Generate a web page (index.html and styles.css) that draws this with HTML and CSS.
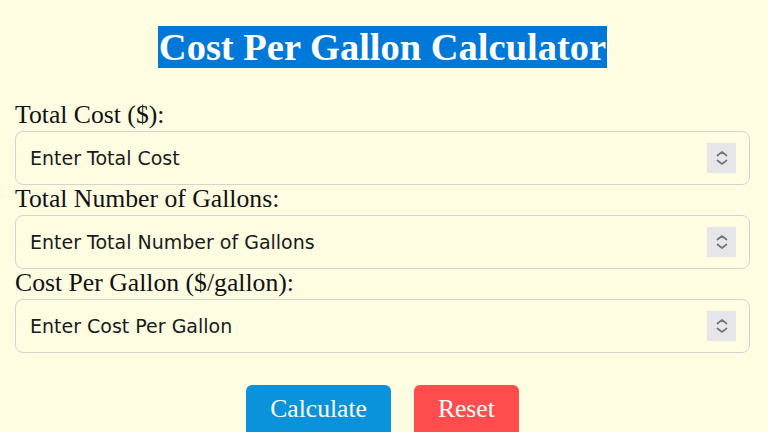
FILE: index.html
```html
<!DOCTYPE html>
<html lang="en">
<head>
    <meta charset="UTF-8" />
    <meta name="viewport" content="width=device-width, initial-scale=1.0" />
    <title>Cost Per Gallon Calculator</title>
    <link rel="stylesheet" href="styles.css">
</head>
<body>
    <div class="calc">
        <h1><span class="title">Cost Per Gallon Calculator</span></h1>
        <form class="form">
            <label for="cost">Total Cost ($):</label>
            <div class="field">
                <input type="text" id="cost" placeholder="Enter Total Cost" />
                <span class="spin"><svg viewBox="0 0 14 18" width="14" height="18"><path d="M2.5 6.5 L7 3 L11.5 6.5 M2.5 11.5 L7 15 L11.5 11.5" fill="none" stroke="#74747e" stroke-width="1.7" stroke-linecap="round" stroke-linejoin="round"/></svg></span>
            </div>
            <label for="gallons">Total Number of Gallons:</label>
            <div class="field">
                <input type="text" id="gallons" placeholder="Enter Total Number of Gallons" />
                <span class="spin"><svg viewBox="0 0 14 18" width="14" height="18"><path d="M2.5 6.5 L7 3 L11.5 6.5 M2.5 11.5 L7 15 L11.5 11.5" fill="none" stroke="#74747e" stroke-width="1.7" stroke-linecap="round" stroke-linejoin="round"/></svg></span>
            </div>
            <label for="cpg">Cost Per Gallon ($/gallon):</label>
            <div class="field">
                <input type="text" id="cpg" placeholder="Enter Cost Per Gallon" />
                <span class="spin"><svg viewBox="0 0 14 18" width="14" height="18"><path d="M2.5 6.5 L7 3 L11.5 6.5 M2.5 11.5 L7 15 L11.5 11.5" fill="none" stroke="#74747e" stroke-width="1.7" stroke-linecap="round" stroke-linejoin="round"/></svg></span>
            </div>
            <div class="buttons">
                <button type="button" class="calculate">Calculate</button>
                <button type="reset" class="reset">Reset</button>
            </div>
        </form>
    </div>
</body>
</html>
```

FILE: styles.css
```css
body{
    margin: 0;
    background-color: #fffde1;
    font-family: "Liberation Serif", "Times New Roman", serif;
    color: #111;
}
.calc{
    padding: 0 18px 0 15px;
}
h1{
    margin: 0;
    padding-top: 26px;
    text-align: center;
    font-size: 38.5px;
    line-height: 43px;
    font-weight: bold;
}
.title{
    background-color: #0078d7;
    color: #fff;
    padding: 0 1px;
}
.form{
    margin-top: 32px;
    display: flex;
    flex-direction: column;
}
label{
    font-size: 25.7px;
    line-height: 28px;
    height: 30px;
}
.field{
    position: relative;
}
.field input{
    box-sizing: border-box;
    width: 100%;
    height: 54px;
    border: 1.5px solid #d3d3d0;
    border-radius: 8px;
    background: transparent;
    padding: 0 14px;
    font-family: "DejaVu Sans", Verdana, sans-serif;
    font-size: 19px;
    outline: none;
}
.field input::placeholder{
    color: #1a1a1a;
}
.spin{
    position: absolute;
    right: 14px;
    top: 12px;
    width: 29px;
    height: 30px;
    background-color: #e6e6ea;
    display: flex;
    align-items: center;
    justify-content: center;
}
.buttons{
    display: flex;
    justify-content: center;
    gap: 23px;
    margin-top: 32px;
}
.buttons button{
    border: none;
    border-radius: 6px;
    color: #fff;
    font-family: "Liberation Serif", "Times New Roman", serif;
    font-size: 25.6px;
    height: 54px;
    padding: 0 24px 6px;
}
.calculate{
    background-color: #0a93da;
}
.reset{
    background-color: #ff4d4d;
}
```
